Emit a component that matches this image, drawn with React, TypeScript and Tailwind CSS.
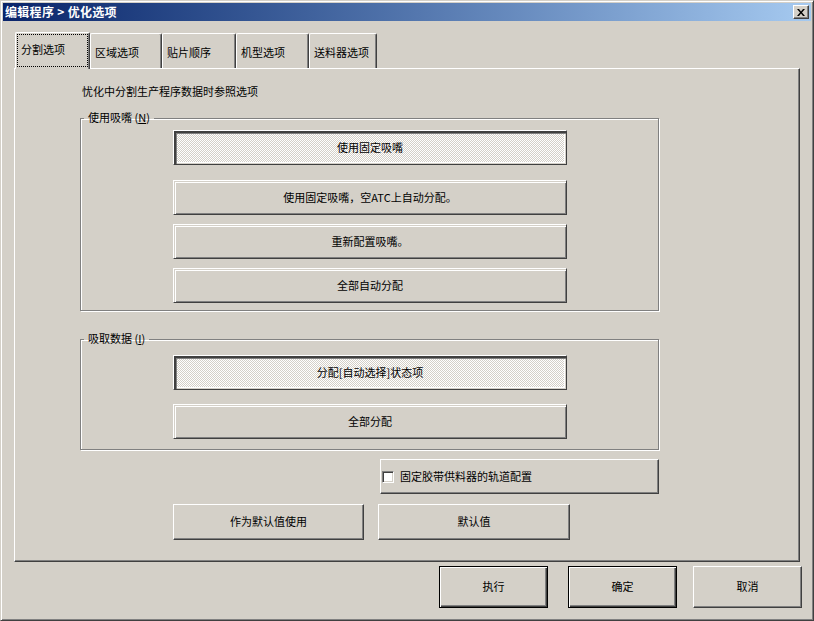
import React from "react";

const raised =
  "border border-t-white border-l-white border-r-[#404040] border-b-[#404040] shadow-[inset_-1px_-1px_0_#808080]";
const toggleOff =
  "border border-t-white border-l-white border-r-[#404040] border-b-[#404040] shadow-[inset_1px_1px_0_#d4d0c8,inset_2px_2px_0_#fff,inset_-1px_-1px_0_#808080]";
const toggleOn =
  "border border-t-white border-l-white border-r-[#404040] border-b-[#404040] shadow-[inset_2px_2px_0_#404040,inset_3px_3px_0_#808080,inset_-1px_-1px_0_#d4d0c8,inset_-2px_-2px_0_#fff] bg-[repeating-conic-gradient(#ffffff_0%_25%,#d4d0c8_0%_50%)] bg-[length:2px_2px]";
const defBtn =
  "border border-black shadow-[inset_1px_1px_0_#fff,inset_-1px_-1px_0_#404040,inset_-2px_-2px_0_#808080]";

function ToggleBtn({ on, children, mt }: { on?: boolean; children: React.ReactNode; mt: string }) {
  return (
    <div
      className={`${mt} ml-[92px] w-[394px] h-[35px] flex items-center justify-center pb-[2px] ${on ? toggleOn : toggleOff}`}
    >
      {children}
    </div>
  );
}

export default function App() {
  return (
    <div className="w-[814px] h-[621px] bg-[#d4d0c8] p-[2px] border border-t-[#d4d0c8] border-l-[#d4d0c8] border-r-[#404040] border-b-[#404040] shadow-[inset_1px_1px_0_#fff,inset_-1px_-1px_0_#808080] text-[11px] leading-[14px] text-black font-['Noto_Sans_CJK_SC',sans-serif] flex flex-col overflow-hidden select-none">
      {/* Title bar */}
      <div className="h-[18px] bg-linear-to-r from-[#0a246a] to-[#a6caf0] flex items-center justify-between pl-[2px] pr-[2px]">
        <span className="text-white font-bold text-[12px] leading-[14px] tracking-[0.3px]">编辑程序 &gt; 优化选项</span>
        <div className={`w-[16px] h-[14px] bg-[#d4d0c8] flex items-center justify-center ${raised}`}>
          <svg width="8" height="7" viewBox="0 0 8 7">
            <path d="M0 0h2l2 2.5L6 0h2L5 3.5 8 7H6L4 4.5 2 7H0l3-3.5z" fill="#000" />
          </svg>
        </div>
      </div>

      {/* Tabs */}
      <div className="mt-[11px] ml-[11px] h-[36px] flex items-end">
        <div className="ml-[1px] w-[75px] h-[37px] -mb-[1px] relative z-10 bg-[#d4d0c8] border-t border-l border-t-white border-l-white border-r border-r-[#404040] shadow-[inset_-1px_0_0_#808080] rounded-tl-[2px] rounded-tr-[2px] p-[1px] pb-[2px]">
          <div className="w-full h-full border border-dotted border-black flex items-center pl-[3px] pb-[3px]">分割选项</div>
        </div>
        {[
          ["区域选项", "w-[72px]"],
          ["贴片顺序", "w-[74px]"],
          ["机型选项", "w-[73px]"],
          ["送料器选项", "w-[68px]"],
        ].map(([t, w]) => (
          <div
            key={t}
            className={`${w} h-[35px] bg-[#d4d0c8] border-t border-l border-t-white border-l-white border-r border-r-[#404040] shadow-[inset_-1px_0_0_#808080] rounded-tl-[2px] rounded-tr-[2px] flex items-center pl-[4px] pt-[1px]`}
          >
            {t}
          </div>
        ))}
      </div>

      {/* Panel */}
      <div className="ml-[11px] w-[786px] h-[494px] border border-t-white border-l-white border-r-[#404040] border-b-[#404040] shadow-[inset_-1px_-1px_0_#808080] flex flex-col">
        <div className="mt-[15px] ml-[67px] h-[14px]">忧化中分割生产程序数据时参照选项</div>

        <fieldset className="mt-[13px] ml-[65px] w-[579px] p-0 pb-[7px] border border-[#808080] shadow-[inset_1px_1px_0_#fff,1px_1px_0_#fff] flex flex-col">
          <legend className="ml-[3px] px-[4px] h-[14px] leading-[12px]">
            使用吸嘴 (<u>N</u>)
          </legend>
          <ToggleBtn on mt="mt-[5px]">使用固定吸嘴</ToggleBtn>
          <ToggleBtn mt="mt-[15px]">使用固定吸嘴，空ATC上自动分配。</ToggleBtn>
          <ToggleBtn mt="mt-[9px]">重新配置吸嘴。</ToggleBtn>
          <ToggleBtn mt="mt-[9px]">全部自动分配</ToggleBtn>
        </fieldset>

        <fieldset className="mt-[21px] ml-[65px] w-[579px] p-0 pb-[10px] border border-[#808080] shadow-[inset_1px_1px_0_#fff,1px_1px_0_#fff] flex flex-col">
          <legend className="ml-[3px] px-[4px] h-[14px] leading-[12px]">
            吸取数据 (<u>I</u>)
          </legend>
          <ToggleBtn on mt="mt-[9px]">分配[自动选择]状态项</ToggleBtn>
          <ToggleBtn mt="mt-[14px]">全部分配</ToggleBtn>
        </fieldset>

        <div className={`mt-[9px] ml-[365px] w-[279px] h-[35px] flex items-center pl-[1px] ${raised}`}>
          <div className="w-[12px] h-[12px] bg-white border border-t-[#808080] border-l-[#808080] border-r-white border-b-white shadow-[inset_1px_1px_0_#404040,inset_-1px_-1px_0_#d4d0c8]" />
          <span className="ml-[6px] pb-[2px]">固定胶带供料器的轨道配置</span>
        </div>

        <div className="mt-[10px] ml-[158px] flex">
          <div className={`w-[191px] h-[36px] flex items-center justify-center pb-[2px] ${raised}`}>作为默认值使用</div>
          <div className={`ml-[14px] w-[192px] h-[36px] flex items-center justify-center pb-[2px] ${raised}`}>默认值</div>
        </div>
      </div>

      {/* Bottom buttons */}
      <div className="mt-[4px] ml-[436px] flex">
        <div className={`w-[109px] h-[42px] flex items-center justify-center pb-[2px] ${defBtn}`}>执行</div>
        <div className={`ml-[20px] w-[109px] h-[42px] flex items-center justify-center pb-[2px] ${defBtn}`}>确定</div>
        <div className={`ml-[16px] w-[109px] h-[42px] flex items-center justify-center pb-[2px] ${raised}`}>取消</div>
      </div>
    </div>
  );
}
